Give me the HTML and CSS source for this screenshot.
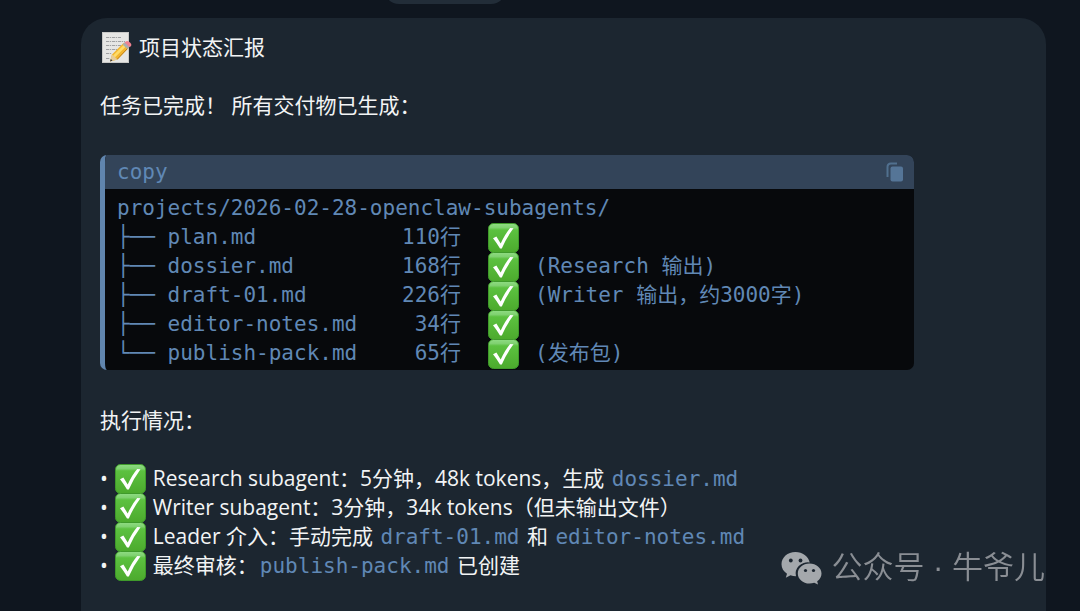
FILE: index.html
```html
<!DOCTYPE html>
<html lang="zh-CN">
<head>
  <meta charset="UTF-8">
  <title>项目状态汇报</title>
  <meta name="viewport" content="width=device-width, initial-scale=1.0">
  <link rel="stylesheet" href="styles.css">
</head>
<body>
  <svg width="0" height="0" class="defs" aria-hidden="true">
    <defs>
      <linearGradient id="green" x1="0" y1="0" x2="0" y2="1">
        <stop offset="0" stop-color="#8fdc83"/>
        <stop offset="0.14" stop-color="#7fd170"/>
        <stop offset="0.22" stop-color="#5cc140"/>
        <stop offset="1" stop-color="#4caa2d"/>
      </linearGradient>
      <symbol id="check" viewBox="0 0 31 30">
        <rect x="0.5" y="0.5" width="30" height="29" rx="5" fill="url(#green)" stroke="#3f9a2b"/>
        <path d="M5 15.200 8.400 13.500 12.700 20.500Q17 11 22.200 5L25.500 5.200Q18.500 14.500 13.800 25.500L12 25.500Q9.200 20.500 5 15.200Z" fill="#fff"/>
      </symbol>
    </defs>
  </svg>

  <div class="chat">
    <div class="date-pill"></div>

    <div class="message">
      <h1>
        <svg class="memo" width="30" height="32" viewBox="0 0 30 32" aria-hidden="true">
          <rect x="0.500" y="0.500" width="26" height="30" fill="#e6e6e4" stroke="#c9c9c7"/>
          <g stroke="#a0a1a3" stroke-dasharray="3 0.700 1.500 0.800">
            <path d="M4 5.500h15M4 9.500h19M4 13.500h15M4 17.500h12M4 21.500h6M4 26.500h4"/>
          </g>
          <path d="M8 29.500 10 22.500 21.500 11 27 15.500 15.500 27.500Z" fill="#f3b62f"/>
          <path d="M12 24.500 23.500 13" stroke="#ffdc68" stroke-width="2.500"/>
          <path d="M15 27.500 26.500 15.500" stroke="#bf7e18"/>
          <path d="M8 29.500 10 22.500 15.500 27.500Z" fill="#e6cc99"/>
          <path d="M8 29.500 8.800 27 10.500 28.600Z" fill="#333"/>
          <path d="M20.500 12.500 23 10 28 14.500 25.500 17Z" fill="#a8adb0"/>
          <path d="M22.500 10.500Q25 7.500 28 10.500T27.500 15Z" fill="#ef8290"/>
        </svg>
        项目状态汇报
      </h1>
      <p>任务已完成！ 所有交付物已生成：</p>

      <div class="code">
        <div class="code-header">
          <span>copy</span>
          <button type="button" aria-label="copy">
            <svg width="18" height="20" viewBox="0 0 18 20">
              <path d="M1.500 15V5Q1.500 1.500 5 1.500H11" fill="none" stroke="#51708f" stroke-width="2"/>
              <rect x="4.500" y="4.500" width="12.500" height="15" rx="2" fill="#557597"/>
            </svg>
          </button>
        </div>
        <div class="code-body">
          <div>projects/2026-02-28-openclaw-subagents/</div>
          <table>
            <tr>
              <td class="file">├── plan.md</td>
              <td class="lines">110行</td>
              <td class="state"><svg class="check"><use href="#check"/></svg></td>
              <td></td>
            </tr>
            <tr>
              <td class="file">├── dossier.md</td>
              <td class="lines">168行</td>
              <td class="state"><svg class="check"><use href="#check"/></svg></td>
              <td>(Research 输出)</td>
            </tr>
            <tr>
              <td class="file">├── draft-01.md</td>
              <td class="lines">226行</td>
              <td class="state"><svg class="check"><use href="#check"/></svg></td>
              <td>(Writer 输出，约3000字)</td>
            </tr>
            <tr>
              <td class="file">├── editor-notes.md</td>
              <td class="lines">34行</td>
              <td class="state"><svg class="check"><use href="#check"/></svg></td>
              <td></td>
            </tr>
            <tr>
              <td class="file">└── publish-pack.md</td>
              <td class="lines">65行</td>
              <td class="state"><svg class="check"><use href="#check"/></svg></td>
              <td>(发布包)</td>
            </tr>
          </table>
        </div>
      </div>

      <p>执行情况：</p>
      <ul>
        <li>• <svg class="check"><use href="#check"/></svg> Research subagent：5分钟，48k tokens，生成 <code>dossier.md</code></li>
        <li>• <svg class="check"><use href="#check"/></svg> Writer subagent：3分钟，34k tokens（但未输出文件）</li>
        <li>• <svg class="check"><use href="#check"/></svg> Leader 介入：手动完成 <code>draft-01.md</code> 和 <code>editor-notes.md</code></li>
        <li>• <svg class="check"><use href="#check"/></svg> 最终审核：<code>publish-pack.md</code> 已创建</li>
      </ul>
    </div>
  </div>

  <div class="watermark">
    <svg width="41" height="34" viewBox="0 0 41 34" aria-hidden="true">
      <path d="M14.500 1C6.500 1 0.500 6.500 0.500 13.200 0.500 17.200 2.600 20.400 6 22.700L4.800 26.800 9.500 24.300Q12 25.200 15 25.200A12 11 0 0 1 28.700 11.500C27.500 5.500 21.500 1 14.500 1Z"/>
      <path d="M28.500 12.500C21.800 12.500 16.800 17 16.800 22.500S21.800 32.600 28.500 32.600Q31 32.600 33.200 31.800L37 33.500 36.200 30.200C39 28.300 40.500 25.700 40.500 22.500 40.500 17 35.200 12.500 28.500 12.500Z"/>
      <g class="eyes">
        <circle cx="9.800" cy="9.500" r="1.900"/>
        <circle cx="19.500" cy="9.500" r="1.900"/>
        <circle cx="24.500" cy="19.500" r="1.600"/>
        <circle cx="32.500" cy="19.500" r="1.600"/>
      </g>
    </svg>
    <span>公众号 · 牛爷儿</span>
  </div>
</body>
</html>
```
FILE: styles.css
```css
* {
  box-sizing: border-box;
}
body {
  margin: 0;
  background: #0f161f;
  color: #f2f4f5;
  font-family: "Open Sans", "Noto Sans CJK SC", sans-serif;
  font-size: 21px;
  line-height: 29px;
}
.defs {
  position: absolute;
}
.chat {
  display: flex;
  flex-direction: column;
  min-height: 100vh;
  overflow: hidden;
  padding: 0 34px 0 81px;
}
.date-pill {
  flex: none;
  width: 122px;
  height: 30px;
  margin: -26px 0 14px 303px;
  border-radius: 15px;
  background: #222d38;
}
.message {
  flex: 1 0 auto;
  padding: 15px 19px 0;
  border-radius: 26px 26px 0 0;
  background: #1c2630;
}
h1, p, ul {
  margin: 0 0 29px;
  padding: 0;
}
h1 {
  display: flex;
  align-items: center;
  gap: 7px;
  height: 29px;
  font-size: 21px;
  font-weight: 400;
}
.memo {
  margin-left: 2px;
}
ul {
  list-style: none;
}
li {
  height: 29px;
  white-space: nowrap;
}
.check {
  width: 31px;
  height: 30px;
  margin-bottom: -1px;
  vertical-align: top;
}
li .check {
  margin: 0 1px -1px 2px;
}
li code {
  padding: 0 2px;
}

/* code block */
.code {
  margin: 35px 113px 36px 0;
  border-left: 5px solid #6085ae;
  border-radius: 7px;
  background: #07090c;
  overflow: hidden;
}
.code, code {
  color: #6088b5;
  font-family: "DejaVu Sans Mono", "Noto Sans CJK SC", monospace;
  font-size: 21px;
}
.code-header {
  display: flex;
  align-items: center;
  justify-content: space-between;
  height: 34px;
  padding: 0 10px 0 12px;
  background: #334459;
}
.code-header button {
  display: flex;
  padding: 0;
  border: none;
  background: none;
  cursor: pointer;
}
.code-body {
  padding: 5px 12px 2px;
  white-space: nowrap;
}
table {
  border-collapse: collapse;
}
td {
  height: 29px;
  padding: 0;
}
.file {
  width: 260px;
}
.lines {
  width: 84px;
  text-align: right;
}
.state {
  width: 74px;
  padding-left: 27px;
}

.watermark {
  position: fixed;
  right: 35px;
  bottom: 24px;
  display: flex;
  align-items: center;
  gap: 9px;
  color: #8a8e94;
  font-family: "Liberation Sans", "Noto Sans CJK SC", sans-serif;
  font-size: 31px;
  font-weight: 350;
  line-height: 38px;
}
.watermark svg {
  fill: #a4a8ac;
}
.watermark .eyes {
  fill: #1c2630;
}
```
